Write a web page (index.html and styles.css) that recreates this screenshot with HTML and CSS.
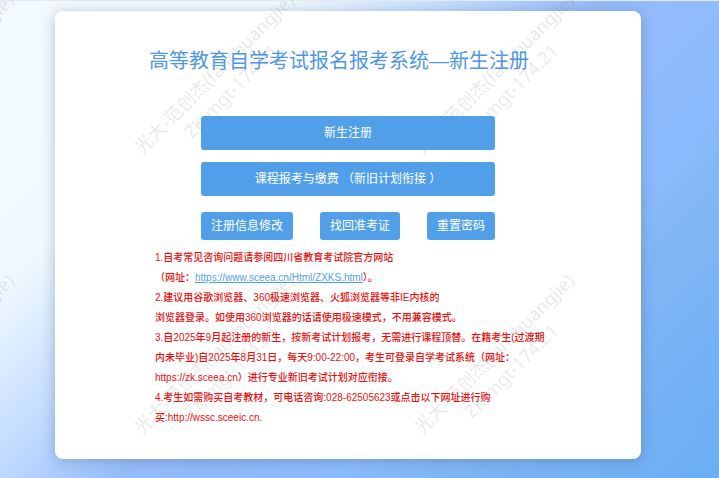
FILE: index.html
```html
<!DOCTYPE html>
<html lang="zh-CN">
<head>
  <meta charset="UTF-8" />
  <meta name="viewport" content="width=device-width, initial-scale=1.0" />
  <title>高等教育自学考试报名报考系统</title>
  <link rel="stylesheet" href="styles.css">
</head>
<body>
  <main class="card">
    <h1 class="title">高等教育自学考试报名报考系统—新生注册</h1>

    <div class="actions">
      <button type="button" class="btn btn-large">新生注册</button>
      <button type="button" class="btn btn-large">课程报考与缴费 （新旧计划衔接 ）</button>
      <div class="action-row">
        <button type="button" class="btn">注册信息修改</button>
        <button type="button" class="btn">找回准考证</button>
        <button type="button" class="btn">重置密码</button>
      </div>
    </div>

    <div class="notice">
      <p>1.自考常见咨询问题请参阅四川省教育考试院官方网站<br>
        （网址：<a href="https://www.sceea.cn/Html/ZXKS.html">https://www.sceea.cn/Html/ZXKS.html</a>）。</p>
      <p>2.建议用谷歌浏览器、360极速浏览器、火狐浏览器等非IE内核的<br>
        浏览器登录。如使用360浏览器的话请使用极速模式，不用兼容模式。</p>
      <p>3.自2025年9月起注册的新生，按新考试计划报考，无需进行课程顶替。在籍考生(过渡期<br>
        内未毕业)自2025年8月31日，每天9:00-22:00，考生可登录自学考试系统（网址：<br>
        https://zk.sceea.cn）进行专业新旧考试计划对应衔接。</p>
      <p>4.考生如需购买自考教材，可电话咨询:028-62505623或点击以下网址进行购<br>
        买:http://wssc.sceeic.cn.</p>
    </div>
  </main>

  <!-- watermark layer -->
  <div class="watermark">
    <span class="mark">光大-范创杰(fanchuangjie)<br>ZK-mgt-174.21</span>
    <span class="mark">光大-范创杰(fanchuangjie)<br>ZK-mgt-174.21</span>
    <span class="mark">光大-范创杰(fanchuangjie)<br>ZK-mgt-174.21</span>
    <span class="mark mark-faint">光大-范创杰(fanchuangjie)<br>ZK-mgt-174.21</span>
    <span class="mark">光大-范创杰(fanchuangjie)<br>ZK-mgt-174.21</span>
    <span class="mark">光大-范创杰(fanchuangjie)<br>ZK-mgt-174.21</span>
    <span class="mark">光大-范创杰(fanchuangjie)<br>ZK-mgt-174.21</span>
    <span class="mark mark-faint">光大-范创杰(fanchuangjie)<br>ZK-mgt-174.21</span>
  </div>
</body>
</html>
```
FILE: styles.css
```css
* {
  box-sizing: border-box;
}

body {
  margin: 0;
  min-height: 100vh;
  display: flex;
  align-items: flex-start;
  padding: 10px 78px 18px 55px;
  border-top: 1px solid #e4e9ee;
  font-family: "Liberation Sans", "Noto Sans CJK SC", sans-serif;
  background: linear-gradient(135deg, #f3faff 0%, #f1f9ff 24%, #bdd8ff 40%, #96bcfa 50%, #8cbbff 68%, #80b6f5 77%, #6aaef5 100%);
}

.card {
  flex: 1;
  padding: 35px 24px 31px;
  background: #fff;
  border-radius: 8px;
  box-shadow: 0 2px 14px rgba(60, 90, 120, 0.35);
}

.title {
  margin: 0;
  padding-right: 18px;
  font-size: 20px;
  line-height: 30px;
  font-weight: 400;
  text-align: center;
  color: #4f97e3;
}

.actions {
  width: 294px;
  max-width: 100%;
  margin: 40px auto 8px;
  display: flex;
  flex-direction: column;
  gap: 12px;
}

.action-row {
  display: flex;
  justify-content: space-between;
  margin-top: 4px;
}

.btn {
  position: relative;
  z-index: 2;
  height: 28px;
  padding: 0 10px;
  border: 0;
  border-radius: 3px;
  background: #529fe9;
  color: #fff;
  font-family: inherit;
  font-size: 12px;
  line-height: 20px;
}

.btn-large {
  height: 34px;
}

.notice {
  width: 394px;
  max-width: 100%;
  margin: 0 auto;
  padding-left: 4px;
  font-size: 10px;
  line-height: 20px;
  font-weight: 500;
  white-space: nowrap;
  color: #e60f0f;
}

.notice p {
  margin: 0;
}

.notice a {
  color: #529fe9;
}

.watermark {
  position: absolute;
  inset: 0;
  z-index: 1;
  display: grid;
  grid-template-columns: repeat(4, 280px);
  grid-auto-rows: 280px;
  align-items: center;
  justify-items: center;
  margin-left: -198px;
  margin-top: -58px;
  overflow: hidden;
  pointer-events: none;
}

.mark {
  transform: rotate(-45deg);
  text-align: center;
  white-space: nowrap;
  font-family: "Noto Sans", "Noto Sans CJK SC", sans-serif;
  font-size: 18px;
  line-height: 24px;
  color: rgba(120, 110, 110, 0.16);
}

.mark-faint {
  color: rgba(120, 110, 110, 0.06);
}
```
